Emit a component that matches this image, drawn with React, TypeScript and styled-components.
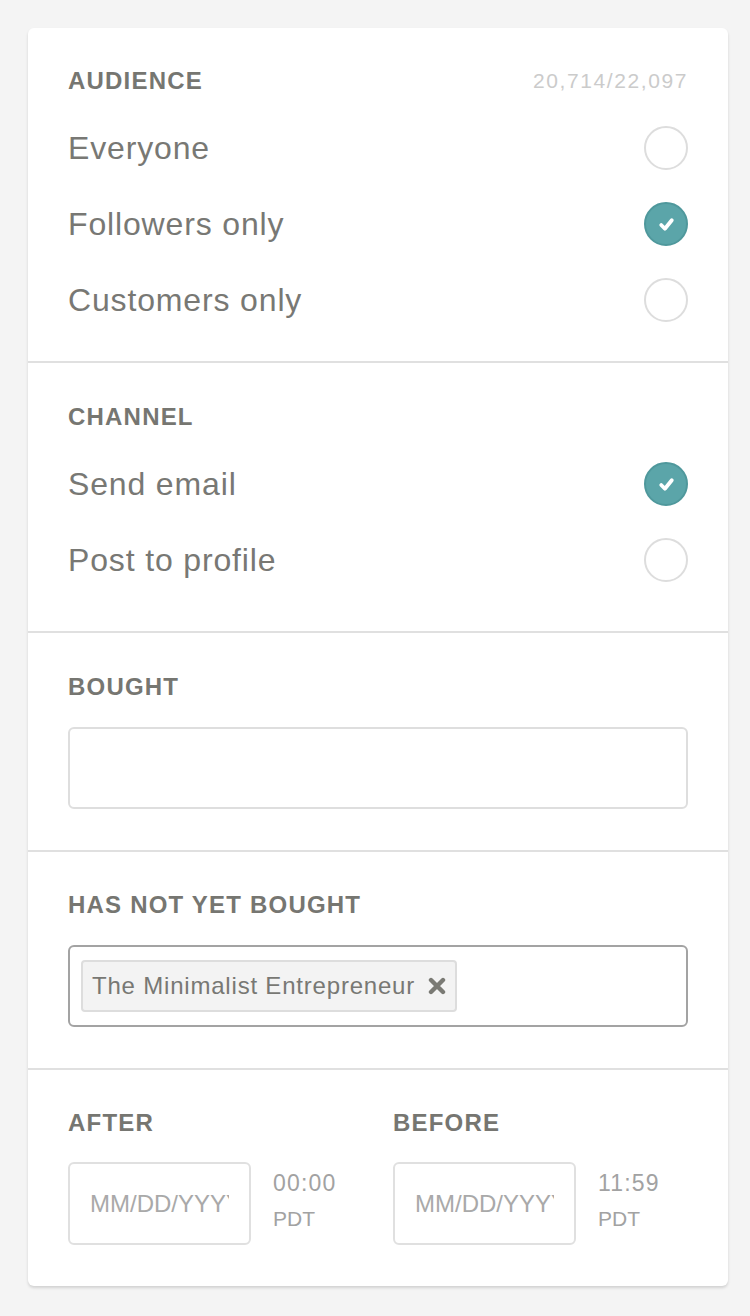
import React from "react";
import styled, { createGlobalStyle } from "styled-components";

const Global = createGlobalStyle`
  html, body { margin: 0; padding: 0; background: #f4f4f4; }
  body { font-family: "Liberation Sans", Arial, sans-serif; }
  * { box-sizing: border-box; }
`;

const Page = styled.div`
  padding: 28px;
  min-height: 1316px;
`;

const Card = styled.div`
  width: 700px;
  background: #fff;
  border-radius: 6px;
  box-shadow: 0 2px 3px rgba(0, 0, 0, 0.14);
`;

const Section = styled.section<{ $pt: number; $pb: number; $first?: boolean }>`
  padding: ${(p) => p.$pt}px 40px ${(p) => p.$pb}px;
  border-top: ${(p) => (p.$first ? "none" : "2px solid #e0e0e0")};
`;

const HeaderRow = styled.div`
  display: flex;
  align-items: center;
  justify-content: space-between;
  height: 24px;
`;

const Heading = styled.h3`
  margin: 0;
  font-size: 24px;
  line-height: 24px;
  font-weight: 700;
  letter-spacing: 1.2px;
  color: #767671;
`;

const Counter = styled.span`
  font-size: 21px;
  line-height: 24px;
  letter-spacing: 1.6px;
  color: #cbcbcb;
`;

const OptionList = styled.div`
  display: flex;
  flex-direction: column;
  gap: 32px;
  margin-top: 33px;
`;

const OptionRow = styled.label`
  display: flex;
  align-items: center;
  justify-content: space-between;
  height: 44px;
  cursor: pointer;
`;

const OptionText = styled.span`
  font-size: 32px;
  letter-spacing: 0.85px;
  color: #787874;
`;

const Radio = styled.span<{ $checked?: boolean }>`
  width: 44px;
  height: 44px;
  border-radius: 50%;
  display: flex;
  align-items: center;
  justify-content: center;
  background: ${(p) => (p.$checked ? "#5ba5a9" : "#fff")};
  border: 2px solid ${(p) => (p.$checked ? "#4f989c" : "#dddddd")};
`;

const Field = styled.div<{ $active?: boolean }>`
  margin-top: 28px;
  height: 82px;
  border: 2px solid ${(p) => (p.$active ? "#a3a3a3" : "#dedede")};
  border-radius: 6px;
  display: flex;
  align-items: center;
  padding: 0 11px;
`;

const Tag = styled.span`
  display: inline-flex;
  align-items: center;
  gap: 13px;
  height: 52px;
  padding: 0 9px;
  background: #f3f3f3;
  border: 2px solid #dddddd;
  border-radius: 4px;
  font-size: 24px;
  letter-spacing: 0.8px;
  color: #787874;
`;

const DateGrid = styled.div`
  display: grid;
  grid-template-columns: 1fr 1fr;
  column-gap: 30px;
`;

const DateCol = styled.div`
  display: flex;
  flex-direction: column;
`;

const DateRow = styled.div`
  display: flex;
  align-items: flex-start;
  gap: 22px;
  margin-top: 27px;
`;

const DateInput = styled.input`
  width: 183px;
  height: 83px;
  border: 2px solid #e0e0e0;
  border-radius: 6px;
  padding: 0 20px;
  font-family: "Liberation Sans", Arial, sans-serif;
  font-size: 24px;
  color: #777;
  outline: none;
  background: #fff;
  &::placeholder {
    color: #a9a9a9;
  }
`;

const TimeBlock = styled.div`
  display: flex;
  flex-direction: column;
  gap: 10px;
  padding-top: 7px;
`;

const TimeText = styled.span`
  font-size: 23px;
  line-height: 28px;
  letter-spacing: 1.2px;
  color: #a2a2a2;
`;

const ZoneText = styled.span`
  font-size: 21px;
  line-height: 24px;
  color: #a2a2a2;
`;

const Check = () => (
  <svg width="19" height="19" viewBox="0 0 18 18" aria-hidden>
    <path
      d="M4 9.5 L7.5 13 L14 5"
      fill="none"
      stroke="#fff"
      strokeWidth="3.6"
      strokeLinecap="round"
      strokeLinejoin="round"
    />
  </svg>
);

const XIcon = () => (
  <svg width="18" height="18" viewBox="0 0 18 18" aria-hidden>
    <path
      d="M3 3 L15 15 M15 3 L3 15"
      stroke="#7a7a74"
      strokeWidth="4.4"
      strokeLinecap="round"
    />
  </svg>
);

const Option = ({ label, checked }: { label: string; checked?: boolean }) => (
  <OptionRow>
    <OptionText>{label}</OptionText>
    <Radio $checked={checked}>{checked && <Check />}</Radio>
  </OptionRow>
);

const DateField = ({ label, time }: { label: string; time: string }) => (
  <DateCol>
    <HeaderRow>
      <Heading>{label}</Heading>
    </HeaderRow>
    <DateRow>
      <DateInput placeholder="MM/DD/YYYY" />
      <TimeBlock>
        <TimeText>{time}</TimeText>
        <ZoneText>PDT</ZoneText>
      </TimeBlock>
    </DateRow>
  </DateCol>
);

export default function App() {
  return (
    <>
      <Global />
      <Page>
        <Card>
          <Section $first $pt={41} $pb={39}>
            <HeaderRow>
              <Heading>AUDIENCE</Heading>
              <Counter>20,714/22,097</Counter>
            </HeaderRow>
            <OptionList>
              <Option label="Everyone" />
              <Option label="Followers only" checked />
              <Option label="Customers only" />
            </OptionList>
          </Section>
          <Section $pt={42} $pb={49}>
            <HeaderRow>
              <Heading>CHANNEL</Heading>
            </HeaderRow>
            <OptionList>
              <Option label="Send email" checked />
              <Option label="Post to profile" />
            </OptionList>
          </Section>
          <Section $pt={42} $pb={41}>
            <HeaderRow>
              <Heading>BOUGHT</Heading>
            </HeaderRow>
            <Field />
          </Section>
          <Section $pt={41} $pb={41}>
            <HeaderRow>
              <Heading>HAS NOT YET BOUGHT</Heading>
            </HeaderRow>
            <Field $active>
              <Tag>
                The Minimalist Entrepreneur
                <XIcon />
              </Tag>
            </Field>
          </Section>
          <Section $pt={41} $pb={41}>
            <DateGrid>
              <DateField label="AFTER" time="00:00" />
              <DateField label="BEFORE" time="11:59" />
            </DateGrid>
          </Section>
        </Card>
      </Page>
    </>
  );
}
